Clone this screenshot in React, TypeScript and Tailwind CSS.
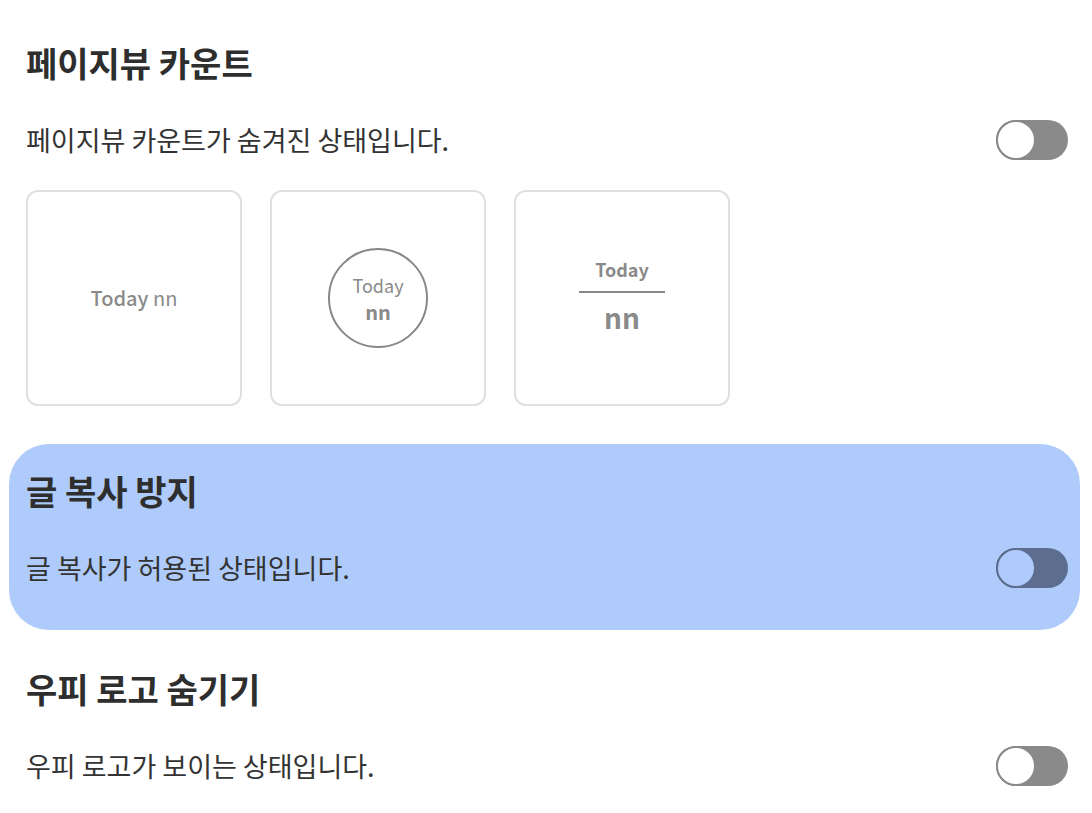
import React from "react";

const font = {
  fontFamily: '"Noto Sans CJK KR", "Noto Sans", sans-serif',
};

/**
 * Off-state toggle switch
 */
function Toggle({ active }: { active?: boolean }) {
  return (
    <div
      className={`relative h-[40px] w-[72px] shrink-0 rounded-full ${
        active ? "bg-[#5d6d8f]" : "bg-[#8a8a8a]"
      }`}
    >
      <div
        className={`absolute left-0 top-0 h-[40px] w-[40px] rounded-full border-2 ${
          active ? "border-[#5d6d8f] bg-[#aecbfb]" : "border-[#8a8a8a] bg-white"
        }`}
      />
    </div>
  );
}

interface SectionProps {
  title: string;
  desc: string;
  active?: boolean;
  className?: string;
  children?: React.ReactNode;
}

function Section({ title, desc, active, className, children }: SectionProps) {
  return (
    <div
      className={`flex flex-col ${
        active ? "-ml-[17px] -mr-[12px] rounded-[40px] bg-[#aecbfb] pl-[17px] pr-[12px]" : ""
      } ${className ?? ""}`}
    >
      <h2 className="text-[34px] font-bold leading-[42px] text-[#2e2e2e]">{title}</h2>
      <div className="mt-[36px] flex h-[40px] items-center justify-between">
        <p className="text-[27px] leading-[34px] text-[#333]">{desc}</p>
        <Toggle active={active} />
      </div>
      {children}
    </div>
  );
}

export default function App() {
  return (
    <div className="min-h-[813px] bg-white pl-[26px] pr-[24px] pt-[16px]" style={font}>
      <Section title="페이지뷰 카운트" desc="페이지뷰 카운트가 숨겨진 상태입니다." className="pt-[26px] pb-[38px]">
        <div className="mt-[30px] flex gap-[28px]">
          <div className="flex h-[216px] w-[216px] items-center justify-center rounded-[12px] border-2 border-[#e0e0e0]">
            <span className="text-[20px] font-medium text-[#8a8a8a]">
              Today <span className="font-normal">nn</span>
            </span>
          </div>
          <div className="flex h-[216px] w-[216px] items-center justify-center rounded-[12px] border-2 border-[#e0e0e0]">
            <div className="flex h-[100px] w-[100px] flex-col items-center justify-center rounded-full border-2 border-[#888]">
              <span className="text-[18px] leading-[22px] text-[#8a8a8a]">Today</span>
              <span className="mt-[5px] text-[20px] font-bold leading-[22px] text-[#8a8a8a]">nn</span>
            </div>
          </div>
          <div className="flex h-[216px] w-[216px] flex-col items-center justify-center rounded-[12px] border-2 border-[#e0e0e0]">
            <span className="mt-[-6px] text-[18px] font-bold leading-[22px] text-[#8a8a8a]">Today</span>
            <div className="mt-[11px] h-[2px] w-[86px] bg-[#888]" />
            <span className="mt-[9px] text-[28px] font-bold leading-[30px] text-[#8a8a8a]">nn</span>
          </div>
        </div>
      </Section>
      <Section title="글 복사 방지" desc="글 복사가 허용된 상태입니다." active className="pt-[26px] pb-[42px]" />
      <Section title="우피 로고 숨기기" desc="우피 로고가 보이는 상태입니다." className="pt-[38px]" />
    </div>
  );
}
